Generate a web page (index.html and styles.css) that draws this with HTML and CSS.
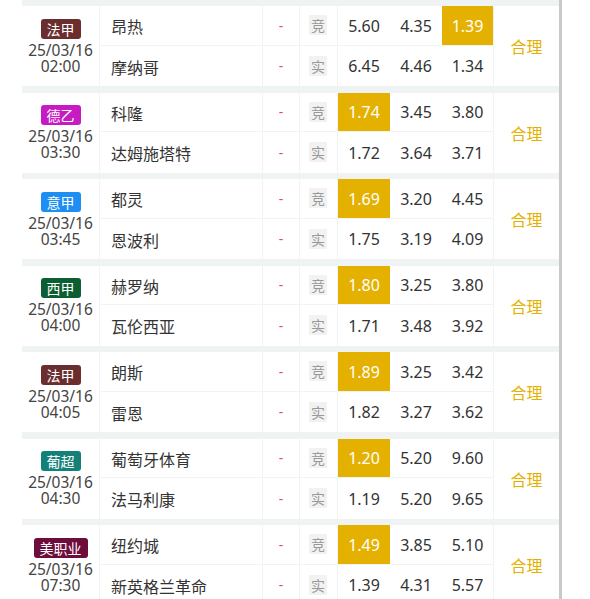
FILE: index.html
```html
<!DOCTYPE html>
<html lang="zh">
<head>
<meta charset="utf-8">
<link rel="stylesheet" href="styles.css">
</head>
<body>
<div class="list">
  <div class="card">
    <div class="info"><span class="badge b-fr">法甲</span><div class="dt">25/03/16</div><div class="dt">02:00</div></div>
    <div class="team t1">昂热</div><div class="score t1">-</div><div class="kind t1"><span>竞</span></div>
    <div class="odd t1">5.60</div><div class="odd t1">4.35</div><div class="odd t1 hl">1.39</div>
    <div class="verdict">合理</div>
    <div class="team t2">摩纳哥</div><div class="score t2">-</div><div class="kind t2"><span>实</span></div>
    <div class="odd t2">6.45</div><div class="odd t2">4.46</div><div class="odd t2">1.34</div>
  </div>
  <div class="card">
    <div class="info"><span class="badge b-de">德乙</span><div class="dt">25/03/16</div><div class="dt">03:30</div></div>
    <div class="team t1">科隆</div><div class="score t1">-</div><div class="kind t1"><span>竞</span></div>
    <div class="odd t1 hl">1.74</div><div class="odd t1">3.45</div><div class="odd t1">3.80</div>
    <div class="verdict">合理</div>
    <div class="team t2">达姆施塔特</div><div class="score t2">-</div><div class="kind t2"><span>实</span></div>
    <div class="odd t2">1.72</div><div class="odd t2">3.64</div><div class="odd t2">3.71</div>
  </div>
  <div class="card">
    <div class="info"><span class="badge b-it">意甲</span><div class="dt">25/03/16</div><div class="dt">03:45</div></div>
    <div class="team t1">都灵</div><div class="score t1">-</div><div class="kind t1"><span>竞</span></div>
    <div class="odd t1 hl">1.69</div><div class="odd t1">3.20</div><div class="odd t1">4.45</div>
    <div class="verdict">合理</div>
    <div class="team t2">恩波利</div><div class="score t2">-</div><div class="kind t2"><span>实</span></div>
    <div class="odd t2">1.75</div><div class="odd t2">3.19</div><div class="odd t2">4.09</div>
  </div>
  <div class="card">
    <div class="info"><span class="badge b-es">西甲</span><div class="dt">25/03/16</div><div class="dt">04:00</div></div>
    <div class="team t1">赫罗纳</div><div class="score t1">-</div><div class="kind t1"><span>竞</span></div>
    <div class="odd t1 hl">1.80</div><div class="odd t1">3.25</div><div class="odd t1">3.80</div>
    <div class="verdict">合理</div>
    <div class="team t2">瓦伦西亚</div><div class="score t2">-</div><div class="kind t2"><span>实</span></div>
    <div class="odd t2">1.71</div><div class="odd t2">3.48</div><div class="odd t2">3.92</div>
  </div>
  <div class="card">
    <div class="info"><span class="badge b-fr">法甲</span><div class="dt">25/03/16</div><div class="dt">04:05</div></div>
    <div class="team t1">朗斯</div><div class="score t1">-</div><div class="kind t1"><span>竞</span></div>
    <div class="odd t1 hl">1.89</div><div class="odd t1">3.25</div><div class="odd t1">3.42</div>
    <div class="verdict">合理</div>
    <div class="team t2">雷恩</div><div class="score t2">-</div><div class="kind t2"><span>实</span></div>
    <div class="odd t2">1.82</div><div class="odd t2">3.27</div><div class="odd t2">3.62</div>
  </div>
  <div class="card">
    <div class="info"><span class="badge b-pt">葡超</span><div class="dt">25/03/16</div><div class="dt">04:30</div></div>
    <div class="team t1">葡萄牙体育</div><div class="score t1">-</div><div class="kind t1"><span>竞</span></div>
    <div class="odd t1 hl">1.20</div><div class="odd t1">5.20</div><div class="odd t1">9.60</div>
    <div class="verdict">合理</div>
    <div class="team t2">法马利康</div><div class="score t2">-</div><div class="kind t2"><span>实</span></div>
    <div class="odd t2">1.19</div><div class="odd t2">5.20</div><div class="odd t2">9.65</div>
  </div>
  <div class="card">
    <div class="info"><span class="badge b-us">美职业</span><div class="dt">25/03/16</div><div class="dt">07:30</div></div>
    <div class="team t1">纽约城</div><div class="score t1">-</div><div class="kind t1"><span>竞</span></div>
    <div class="odd t1 hl">1.49</div><div class="odd t1">3.85</div><div class="odd t1">5.10</div>
    <div class="verdict">合理</div>
    <div class="team t2">新英格兰革命</div><div class="score t2">-</div><div class="kind t2"><span>实</span></div>
    <div class="odd t2">1.39</div><div class="odd t2">4.31</div><div class="odd t2">5.57</div>
  </div>
</div>
</body>
</html>
```
FILE: styles.css
```css
* { box-sizing: border-box; }
html, body { margin: 0; padding: 0; background: #fff; overflow: hidden; }
body {
  font-family: "Noto Sans", "Noto Sans CJK SC", sans-serif;
  color: #333;
  font-size: 16px;
}
.list {
  margin-left: 22px;
  width: 540px;
  height: 599px;
  background: #eff3f3;
  border-right: 3px solid #c9c9c9;
  padding-top: 6px;
}
.card {
  background: #fff;
  height: 80px;
  margin-bottom: 6.5px;
  display: grid;
  grid-template-columns: 78px 163px 37px 38px 52px 52px 52px 65px;
  grid-template-rows: 39.5px 40.5px;
}
.info {
  grid-row: 1 / 3;
  grid-column: 1;
  border-right: 1px solid #f2f4f4;
  display: flex;
  flex-direction: column;
  align-items: center;
  justify-content: center;
}
.badge {
  display: inline-block;
  height: 20px;
  line-height: 20px;
  padding: 0 6px;
  font-size: 14px;
  color: #fff;
  border-radius: 3px;
  margin-bottom: 3px;
  font-family: "Noto Sans CJK SC", sans-serif;
}
.b-fr { background: #6b2e2e; }
.b-de { background: #c61bc3; }
.b-it { background: #1e8ff2; }
.b-es { background: #0d5f33; }
.b-pt { background: #148078; }
.b-us { background: #6e0d3c; }
.dt {
  font-size: 15.5px;
  height: 16px;
  line-height: 16px;
  text-align: center;
  color: #444;
}
.t1 { grid-row: 1; border-bottom: 1px solid #f2f4f4; }
.t2 { grid-row: 2; }
.team {
  display: flex;
  align-items: center;
  padding-left: 11px;
  padding-top: 2px;
  border-right: 1px solid #f2f4f4;
}
.score {
  display: flex;
  align-items: center;
  justify-content: center;
  color: #e24a6a;
  font-size: 14px;
  border-right: 1px solid #f2f4f4;
}
.kind {
  display: flex;
  align-items: center;
  justify-content: center;
  border-right: 1px solid #f2f4f4;
}
.kind span {
  display: block;
  width: 18px;
  height: 20px;
  line-height: 20px;
  text-align: center;
  background: #f2f2f2;
  color: #999;
  font-size: 14px;
  margin-left: -1px;
  font-family: "Noto Sans CJK SC", sans-serif;
}
.odd {
  display: flex;
  align-items: center;
  justify-content: center;
  padding-top: 1px;
}
.odd:nth-child(7), .odd:nth-child(14) { border-right: 1px solid #f2f4f4; }
.hl { background: #e5b100; color: #fff; }
.verdict {
  grid-row: 1 / 3;
  grid-column: 8;
  display: flex;
  align-items: center;
  justify-content: center;
  color: #e5b100;
}
```
